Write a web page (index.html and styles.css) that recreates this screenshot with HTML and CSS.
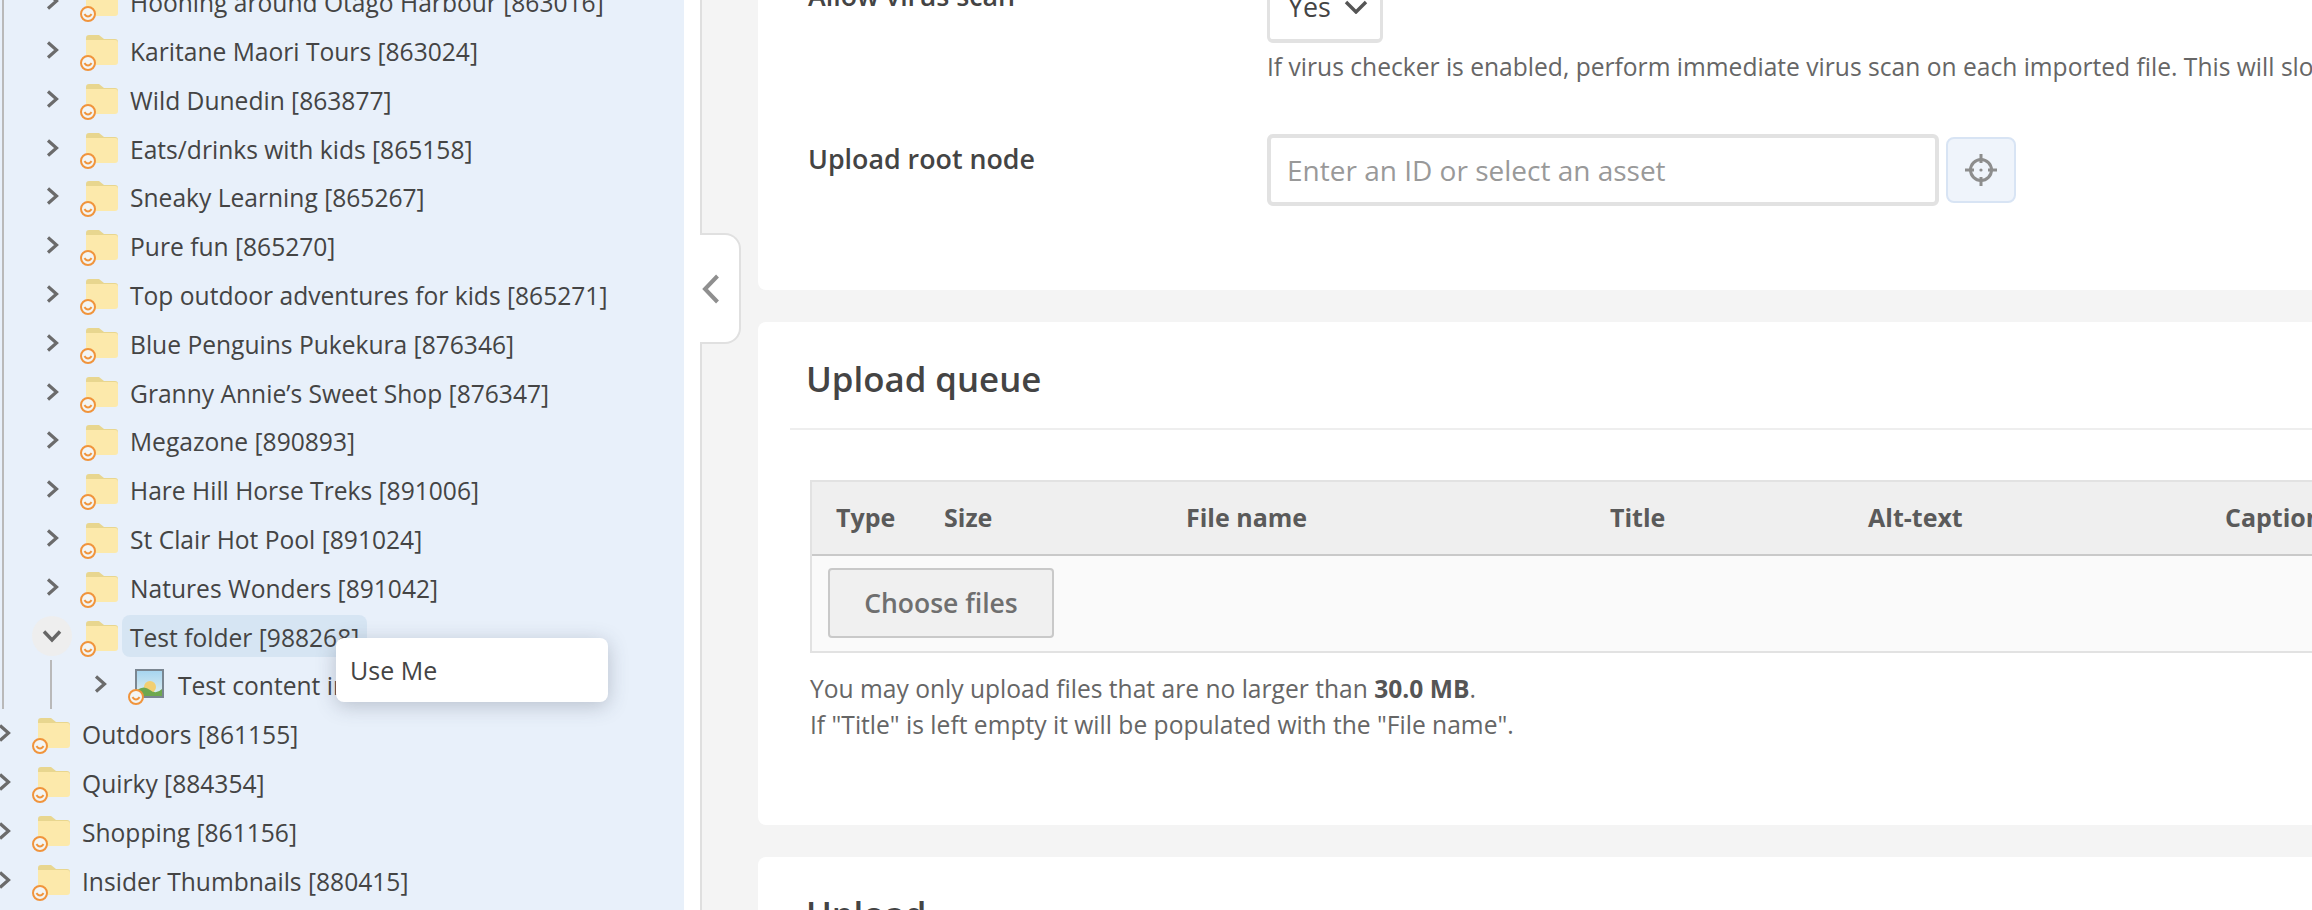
FILE: index.html
```html
<!DOCTYPE html>
<html lang="en">
<head>
<meta charset="utf-8">
<title>Upload</title>
<link rel="stylesheet" href="styles.css">
</head>
<body>
<svg class="defs" width="0" height="0" aria-hidden="true">
  <defs><linearGradient id="sky" x1="0" y1="0" x2="0" y2="1"><stop offset="0" stop-color="#a5d4ef"/><stop offset="1" stop-color="#e4f1f2"/></linearGradient></defs>
  <symbol id="chev-r" viewBox="0 0 14 18"><path d="M3 1.5 L11.5 9 L3 16.5" fill="none" stroke="#6b6b6b" stroke-width="3.2"/></symbol>
  <symbol id="chev-d" viewBox="0 0 20 14"><path d="M2 2.5 L10 11 L18 2.5" fill="none" stroke="#666" stroke-width="3.4"/></symbol>
  <symbol id="folder" viewBox="0 0 32 30"><path d="M0 5 V3 Q0 0 3 0 H13 L18 4 H29 Q32 4 32 7 V8 H0Z" fill="#e8d68f"/><path d="M0 5 H29 Q32 5 32 8 V27 Q32 30 29 30 H3 Q0 30 0 27Z" fill="#fce9ab"/></symbol>
  <symbol id="smile" viewBox="0 0 16 16"><circle cx="8" cy="8" r="7" fill="#f3f5f4" stroke="#f0943c" stroke-width="2"/><path d="M4.4 8.2 Q8 13 11.6 8.2" fill="none" stroke="#f0943c" stroke-width="2"/></symbol>
  <symbol id="picture" viewBox="0 0 29 29"><rect x="1" y="1" width="27" height="27" fill="url(#sky)" stroke="#7a8691" stroke-width="2"/><circle cx="15" cy="18" r="6" fill="#f2cf72"/><path d="M2 21 Q9 16 15 21 T27 20 V27 H2Z" fill="#6ea84f"/></symbol>
</svg>

<div class="page">
  <aside class="sidebar">
    <ul class="tree">
      <li>
        <ul class="sub">
          <li class="row"><span class="tw"><svg class="ic-r"><use href="#chev-r"/></svg></span><span class="ico"><svg class="folder"><use href="#folder"/></svg><svg class="smile"><use href="#smile"/></svg></span><span class="lbl">Hooning around Otago Harbour [863016]</span></li>
          <li class="row"><span class="tw"><svg class="ic-r"><use href="#chev-r"/></svg></span><span class="ico"><svg class="folder"><use href="#folder"/></svg><svg class="smile"><use href="#smile"/></svg></span><span class="lbl">Karitane Maori Tours [863024]</span></li>
          <li class="row"><span class="tw"><svg class="ic-r"><use href="#chev-r"/></svg></span><span class="ico"><svg class="folder"><use href="#folder"/></svg><svg class="smile"><use href="#smile"/></svg></span><span class="lbl">Wild Dunedin [863877]</span></li>
          <li class="row"><span class="tw"><svg class="ic-r"><use href="#chev-r"/></svg></span><span class="ico"><svg class="folder"><use href="#folder"/></svg><svg class="smile"><use href="#smile"/></svg></span><span class="lbl">Eats/drinks with kids [865158]</span></li>
          <li class="row"><span class="tw"><svg class="ic-r"><use href="#chev-r"/></svg></span><span class="ico"><svg class="folder"><use href="#folder"/></svg><svg class="smile"><use href="#smile"/></svg></span><span class="lbl">Sneaky Learning [865267]</span></li>
          <li class="row"><span class="tw"><svg class="ic-r"><use href="#chev-r"/></svg></span><span class="ico"><svg class="folder"><use href="#folder"/></svg><svg class="smile"><use href="#smile"/></svg></span><span class="lbl">Pure fun [865270]</span></li>
          <li class="row"><span class="tw"><svg class="ic-r"><use href="#chev-r"/></svg></span><span class="ico"><svg class="folder"><use href="#folder"/></svg><svg class="smile"><use href="#smile"/></svg></span><span class="lbl">Top outdoor adventures for kids [865271]</span></li>
          <li class="row"><span class="tw"><svg class="ic-r"><use href="#chev-r"/></svg></span><span class="ico"><svg class="folder"><use href="#folder"/></svg><svg class="smile"><use href="#smile"/></svg></span><span class="lbl">Blue Penguins Pukekura [876346]</span></li>
          <li class="row"><span class="tw"><svg class="ic-r"><use href="#chev-r"/></svg></span><span class="ico"><svg class="folder"><use href="#folder"/></svg><svg class="smile"><use href="#smile"/></svg></span><span class="lbl">Granny Annie’s Sweet Shop [876347]</span></li>
          <li class="row"><span class="tw"><svg class="ic-r"><use href="#chev-r"/></svg></span><span class="ico"><svg class="folder"><use href="#folder"/></svg><svg class="smile"><use href="#smile"/></svg></span><span class="lbl">Megazone [890893]</span></li>
          <li class="row"><span class="tw"><svg class="ic-r"><use href="#chev-r"/></svg></span><span class="ico"><svg class="folder"><use href="#folder"/></svg><svg class="smile"><use href="#smile"/></svg></span><span class="lbl">Hare Hill Horse Treks [891006]</span></li>
          <li class="row"><span class="tw"><svg class="ic-r"><use href="#chev-r"/></svg></span><span class="ico"><svg class="folder"><use href="#folder"/></svg><svg class="smile"><use href="#smile"/></svg></span><span class="lbl">St Clair Hot Pool [891024]</span></li>
          <li class="row"><span class="tw"><svg class="ic-r"><use href="#chev-r"/></svg></span><span class="ico"><svg class="folder"><use href="#folder"/></svg><svg class="smile"><use href="#smile"/></svg></span><span class="lbl">Natures Wonders [891042]</span></li>
          <li class="row"><span class="tw open"><svg class="ic-d"><use href="#chev-d"/></svg></span><span class="ico"><svg class="folder"><use href="#folder"/></svg><svg class="smile"><use href="#smile"/></svg></span><span class="lbl selected">Test folder [988268]</span>
            <div class="menu">Use Me</div>
          </li>
          <li>
            <ul class="sub">
              <li class="row"><span class="tw"><svg class="ic-r"><use href="#chev-r"/></svg></span><span class="ico"><svg class="pic"><use href="#picture"/></svg><svg class="smile"><use href="#smile"/></svg></span><span class="lbl">Test content image</span></li>
            </ul>
          </li>
        </ul>
      </li>
      <li class="row"><span class="tw"><svg class="ic-r"><use href="#chev-r"/></svg></span><span class="ico"><svg class="folder"><use href="#folder"/></svg><svg class="smile"><use href="#smile"/></svg></span><span class="lbl">Outdoors [861155]</span></li>
      <li class="row"><span class="tw"><svg class="ic-r"><use href="#chev-r"/></svg></span><span class="ico"><svg class="folder"><use href="#folder"/></svg><svg class="smile"><use href="#smile"/></svg></span><span class="lbl">Quirky [884354]</span></li>
      <li class="row"><span class="tw"><svg class="ic-r"><use href="#chev-r"/></svg></span><span class="ico"><svg class="folder"><use href="#folder"/></svg><svg class="smile"><use href="#smile"/></svg></span><span class="lbl">Shopping [861156]</span></li>
      <li class="row"><span class="tw"><svg class="ic-r"><use href="#chev-r"/></svg></span><span class="ico"><svg class="folder"><use href="#folder"/></svg><svg class="smile"><use href="#smile"/></svg></span><span class="lbl">Insider Thumbnails [880415]</span></li>
    </ul>
  </aside>

  <main class="main">
    <button class="handle" type="button" aria-label="Collapse">
      <svg width="18" height="30" viewBox="0 0 18 30"><path d="M15.5 2 L3 15 L15.5 28" fill="none" stroke="#8f8f8f" stroke-width="4"/></svg>
    </button>

    <section class="card card-settings">
      <div class="field field-virus">
        <div class="field-label">Allow virus scan</div>
        <div class="field-body">
          <div class="select"><span>Yes</span>
            <svg width="24" height="14" viewBox="0 0 24 14"><path d="M2 2 L12 12 L22 2" fill="none" stroke="#555" stroke-width="3.4"/></svg>
          </div>
          <p class="help">If virus checker is enabled, perform immediate virus scan on each imported file. This will slow down the import process.</p>
        </div>
      </div>
      <div class="field">
        <div class="field-label">Upload root node</div>
        <div class="field-body picker">
          <div class="input">Enter an ID or select an asset</div>
          <button class="target" type="button" aria-label="Select asset">
            <svg width="32" height="32" viewBox="0 0 32 32"><g fill="none" stroke="#8d8d8d" stroke-width="3"><circle cx="16" cy="16" r="10.5"/><path d="M16 0 V9 M16 23 V32 M0 16 H9 M23 16 H32"/></g><circle cx="16" cy="16" r="1.6" fill="#8d8d8d"/></svg>
          </button>
        </div>
      </div>
    </section>

    <section class="card card-queue">
      <h2 class="card-title">Upload queue</h2>
      <div class="queue">
        <div class="queue-head">
          <span>Type</span><span>Size</span><span>File name</span><span>Title</span><span>Alt-text</span><span>Caption</span>
        </div>
        <div class="queue-body"><button class="choose" type="button">Choose files</button></div>
      </div>
      <p class="note">You may only upload files that are no larger than <strong>30.0 MB</strong>.<br>If "Title" is left empty it will be populated with the "File name".</p>
    </section>

    <section class="card card-upload">
      <h2 class="card-title">Upload</h2>
    </section>
  </main>
</div>
</body>
</html>
```
FILE: styles.css
```css
* { box-sizing: border-box; }
html, body { margin: 0; height: 910px; overflow: hidden; background: #fff; }
body { font-family: "Open Sans", "Noto Sans", sans-serif; font-size: 24.6px; color: #444; }
.defs { position: absolute; }

.page { display: flex; width: 2312px; height: 910px; overflow: hidden; }

/* sidebar tree */
.sidebar { flex: 0 0 684px; height: 910px; background: #e8f0fa; margin-right: 16px; position: relative; z-index: 2; }
.tree, .sub { list-style: none; margin: 0; padding: 0; }
.tree { margin-top: -23.2px; }
.sub { margin-left: 2px; border-left: 2px solid #b9b9b9; padding-left: 44px; }
.row { position: relative; display: flex; align-items: center; height: 48.8px; margin-left: -16px; white-space: nowrap; }
.tw { flex: 0 0 40px; height: 40px; display: flex; align-items: center; justify-content: center; border-radius: 50%; }
.tw.open { background: #eeeeee; }
.ic-r { width: 14px; height: 18px; }
.ic-d { width: 20px; height: 14px; }
.ico { position: relative; flex: 0 0 32px; height: 30px; margin-left: 14px; margin-right: 4px; }
.folder { display: block; width: 32px; height: 30px; }
.pic { display: block; width: 29px; height: 29px; margin-left: 1px; }
.smile { position: absolute; left: -6px; top: 20px; width: 16px; height: 16px; }
.lbl { padding: 2px 8px 0; height: 42px; line-height: 41px; border-radius: 8px; color: #444; }
.lbl.selected { background: #d6e5f3; }
.menu { position: absolute; z-index: 5; left: 304px; top: 27px; width: 272px; height: 64px; padding-left: 14px; font-size: 25px; line-height: 64px; background: #fff; border-radius: 8px; box-shadow: 0 4px 20px rgba(60, 70, 90, .28); color: #444; }

/* main */
.main { position: relative; flex: 0 0 1800px; height: 910px; background: #f4f4f4; border-left: 2px solid #dfdfdf; padding-left: 56px; }
.handle { position: absolute; left: -2px; top: 233px; width: 41px; height: 111px; padding: 0 0 0 2px; display: flex; align-items: center; background: #fff; border: 2px solid #e0e0e0; border-left: 0; border-radius: 0 16px 16px 0; }

.card { background: #fff; border-radius: 8px; margin-bottom: 32px; }
.card-settings { height: 390px; margin-top: -100px; padding: 71px 0 0 50px; }
.field { display: flex; }
.field-virus { height: 163px; }
.field-label { flex: 0 0 459px; padding-top: 1px; font-size: 26.8px; line-height: 48px; font-weight: 600; color: #444; }
.select { display: flex; align-items: center; gap: 13px; width: 116px; height: 72px; padding-left: 18px; border: 3px solid #e2e2e2; border-bottom-width: 4px; border-radius: 6px; font-size: 26.8px; color: #444; }
.help { margin: 8px 0 0; font-size: 24.6px; line-height: 32px; color: #666; white-space: nowrap; }
.picker { display: flex; align-items: center; gap: 7px; }
.input { width: 672px; height: 72px; padding-left: 16px; font-size: 28px; line-height: 64px; border: 4px solid #e2e2e2; border-radius: 6px; color: #999; }
.target { width: 70px; height: 66px; padding: 0; display: flex; align-items: center; justify-content: center; background: #eff4fb; border: 2px solid #d8e4f4; border-radius: 8px; }

.card-queue { height: 503px; padding-left: 32px; }
.card-title { margin: 0; height: 108px; padding: 33px 0 0 16px; font-size: 34.8px; line-height: 48px; font-weight: 600; color: #444; border-bottom: 2px solid #eee; }
.queue { margin: 50px 0 0 20px; border: 2px solid #e2e2e2; background: #fafafa; height: 173px; }
.queue-head { display: grid; grid-template-columns: 108px 242px 424px 258px 357px 1fr; height: 74px; padding: 0 0 3px 24px; align-items: center; background: #efefef; border-bottom: 2px solid #c9c9c9; font-size: 25px; font-weight: 700; color: #5a5a5a; }
.queue-body { padding: 12px 16px; }
.choose { display: block; width: 226px; height: 70px; padding: 0; font: 600 26.5px "Open Sans", sans-serif; color: #6f6f6f; background: #f0f0f0; border: 2px solid #c9c9c9; border-radius: 4px; }
.note { margin: 18px 0 0 20px; font-size: 24.6px; line-height: 36px; color: #666; }
.note strong { color: #555; }

.card-upload { height: 200px; padding-left: 32px; }
```
